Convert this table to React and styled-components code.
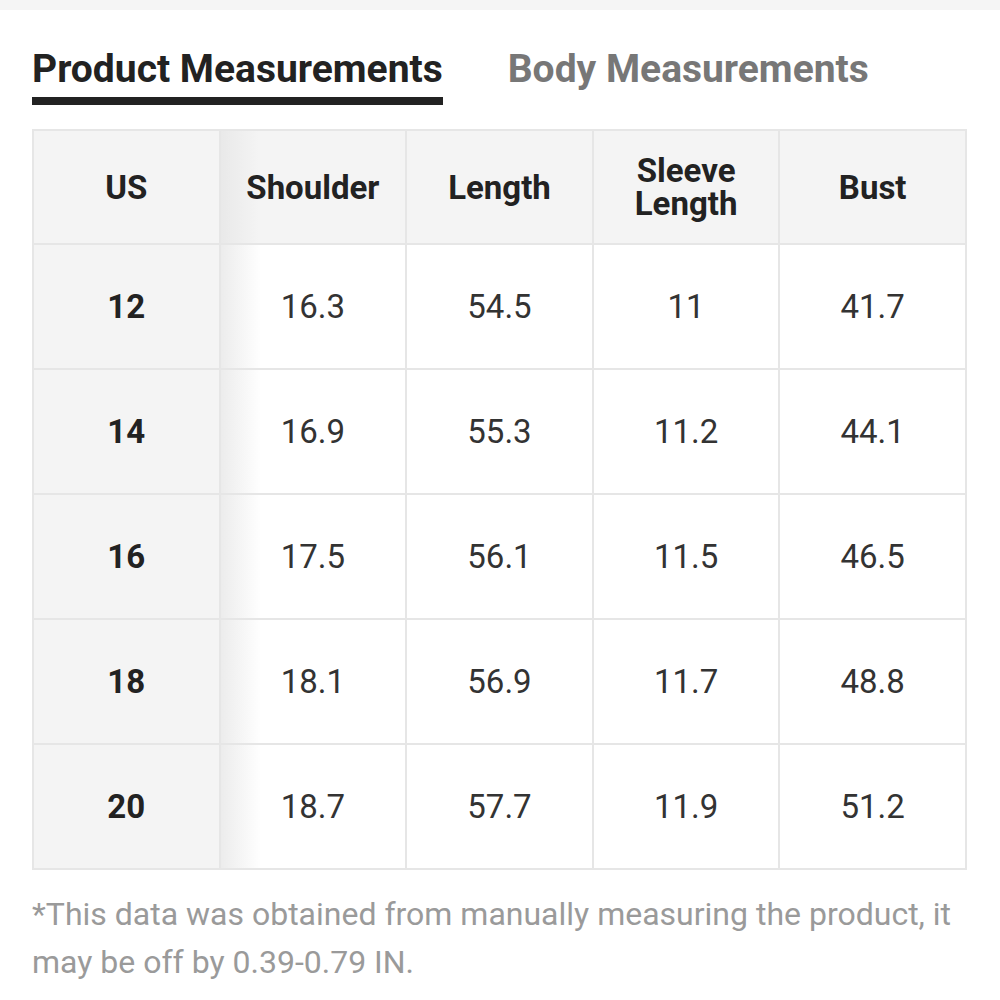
import React, { useState } from 'react';
import styled, { createGlobalStyle } from 'styled-components';

const GlobalStyle = createGlobalStyle`
  body {
    margin: 0;
    background: #fff;
    font-family: Roboto, 'Noto Sans', sans-serif;
  }
`;

const Page = styled.div`
  width: 1000px;
  height: 1000px;
  overflow: hidden;
  background: #fff;
`;

const TopStrip = styled.div`
  height: 10px;
  background: #f5f5f5;
`;

const Body = styled.div`
  padding: 36px 0 0 32px;
`;

const Tabs = styled.div`
  display: flex;
  gap: 65px;
`;

const Tab = styled.button`
  border: none;
  background: none;
  padding: 0 0 5px;
  margin: 0;
  font-family: Roboto, sans-serif;
  font-weight: 700;
  font-size: 39px;
  line-height: 46px;
  color: ${(p) => (p.active ? '#222' : '#777')};
  border-bottom: 8px solid ${(p) => (p.active ? '#222' : 'transparent')};
  cursor: pointer;
`;

const TableWrap = styled.div`
  margin-top: 24px;
  width: 935px;
`;

const Table = styled.table`
  border-collapse: collapse;
  table-layout: fixed;
  width: 935px;
  border: 2px solid #e6e6e6;
`;

const HeadCell = styled.th`
  height: 112px;
  padding: 0 8px;
  background: #f4f4f4;
  border: 2px solid #e6e6e6;
  font-weight: 700;
  font-size: 33px;
  line-height: 33px;
  color: #222;
  text-align: center;
  ${(p) => p.shadow && 'background: linear-gradient(to right, #e9e9e9, #f4f4f4 38px);'}
`;

const Cell = styled.td`
  height: 123px;
  padding: 0;
  border: 2px solid #e6e6e6;
  font-size: 33px;
  text-align: center;
  background: ${(p) => (p.first ? '#f4f4f4' : '#fff')};
  font-weight: ${(p) => (p.first ? 700 : 400)};
  color: ${(p) => (p.first ? '#222' : '#333')};
  ${(p) => p.shadow && 'background: linear-gradient(to right, #ececec, #fff 40px);'}
`;

const Note = styled.p`
  margin: 20px 30px 0 0;
  font-size: 32px;
  line-height: 48px;
  color: #9a9a9a;
`;

const headers = ['US', 'Shoulder', 'Length', 'Sleeve Length', 'Bust'];

const rows = [
  ['12', '16.3', '54.5', '11', '41.7'],
  ['14', '16.9', '55.3', '11.2', '44.1'],
  ['16', '17.5', '56.1', '11.5', '46.5'],
  ['18', '18.1', '56.9', '11.7', '48.8'],
  ['20', '18.7', '57.7', '11.9', '51.2'],
];

export default function App() {
  const [tab, setTab] = useState('product');

  return (
    <Page>
      <GlobalStyle />
      <TopStrip />
      <Body>
        <Tabs>
          <Tab active={tab === 'product'} onClick={() => setTab('product')}>
            Product Measurements
          </Tab>
          <Tab active={tab === 'body'} onClick={() => setTab('body')}>
            Body Measurements
          </Tab>
        </Tabs>
        <TableWrap>
          <Table>
            <thead>
              <tr>
                {headers.map((h, i) => (
                  <HeadCell key={h} shadow={i === 1}>
                    {h}
                  </HeadCell>
                ))}
              </tr>
            </thead>
            <tbody>
              {rows.map((row) => (
                <tr key={row[0]}>
                  {row.map((v, i) => (
                    <Cell key={i} first={i === 0} shadow={i === 1}>
                      {v}
                    </Cell>
                  ))}
                </tr>
              ))}
            </tbody>
          </Table>
        </TableWrap>
        <Note>
          *This data was obtained from manually measuring the product, it
          may be off by 0.39-0.79 IN.
        </Note>
      </Body>
    </Page>
  );
}
